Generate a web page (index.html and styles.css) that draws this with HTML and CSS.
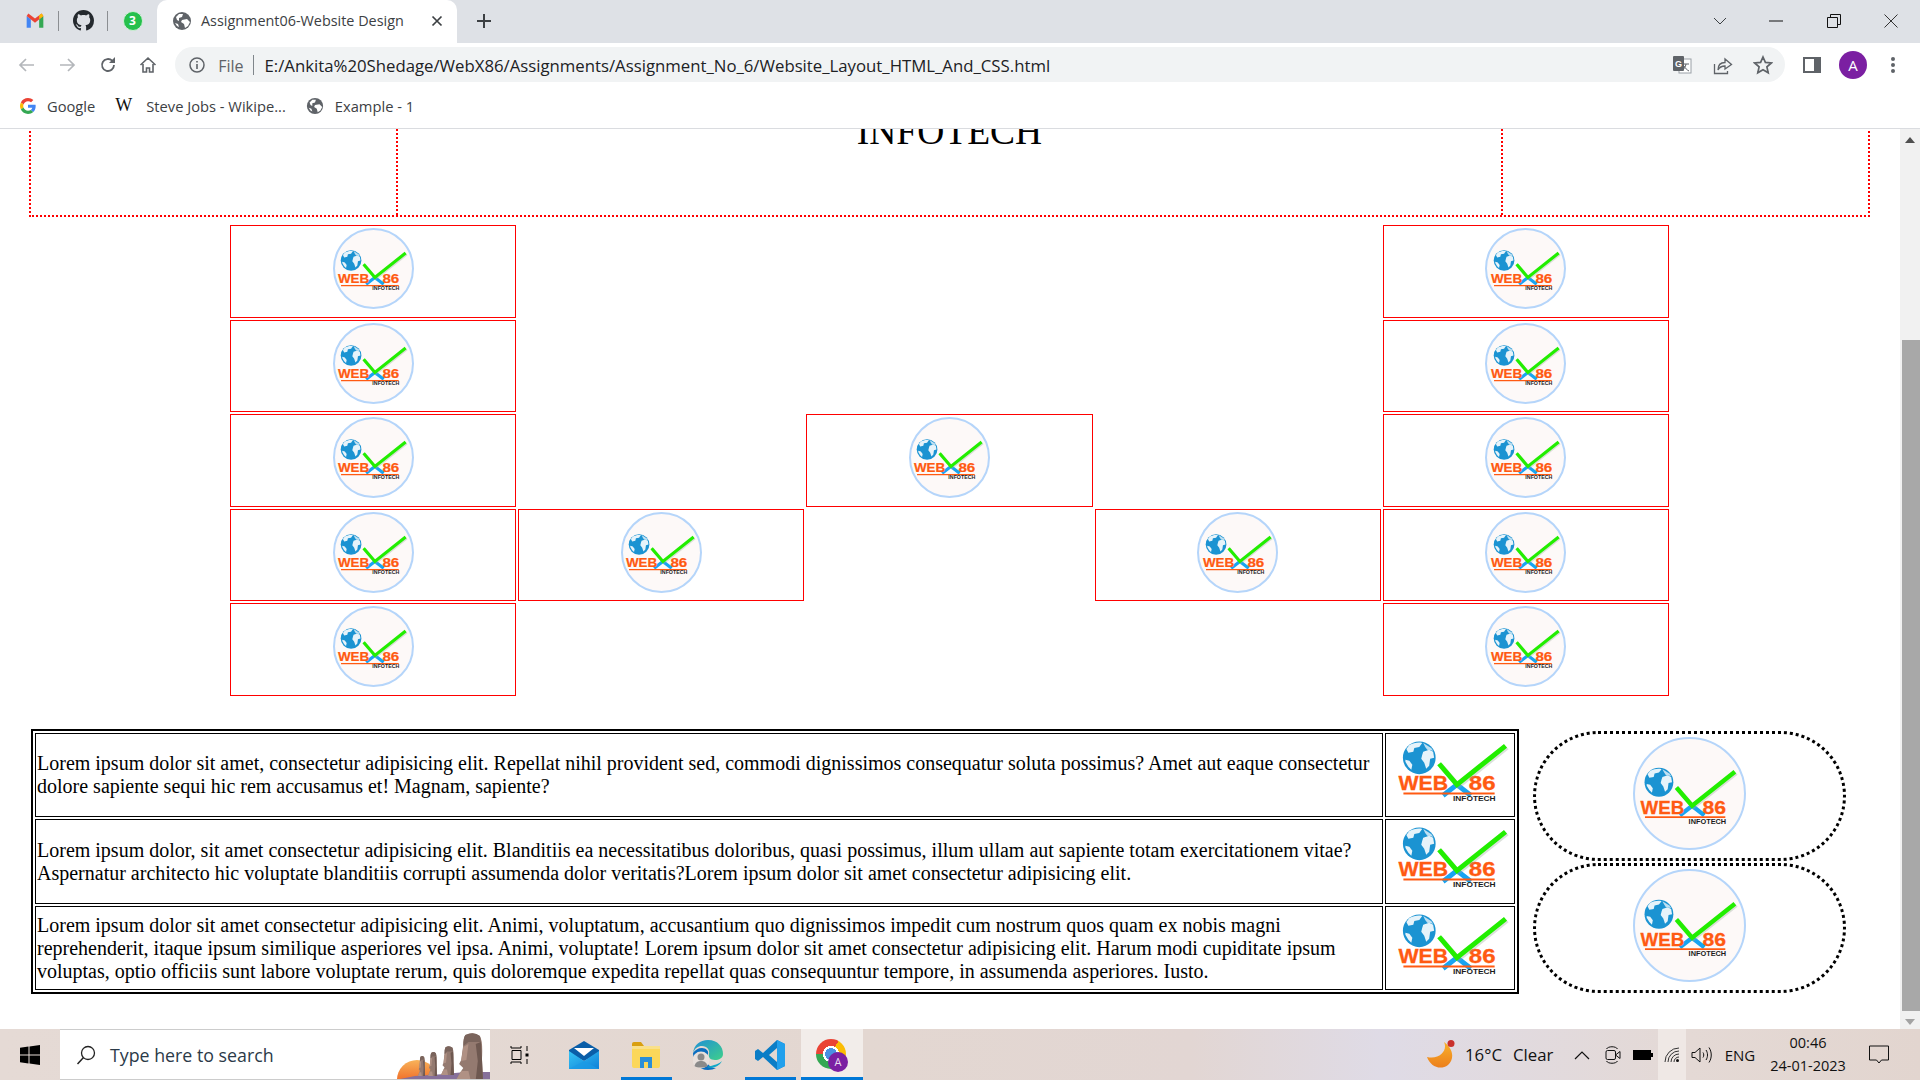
FILE: index.html
```html
<!DOCTYPE html>
<html>
  <head>
    <meta charset="utf-8" />
    <meta name="viewport" content="width=device-width, initial-scale=1" />
    <title>Assignment06-Website Design</title>
    <link rel="stylesheet" href="styles.css">
  </head>
  <body>
    <svg class="icon-defs" width="0" height="0">
      <defs>
        <linearGradient id="mail-body" x1="0" y1="0" x2="1" y2="1">
          <stop offset="0" stop-color="#35c4f5" />
          <stop offset="1" stop-color="#0f80d8" />
        </linearGradient>
        <linearGradient id="edge-top" x1="0" y1="0" x2="1" y2="1">
          <stop offset="0" stop-color="#1f8fd6" />
          <stop offset="1" stop-color="#3fd08a" />
        </linearGradient>
        <linearGradient id="sun" x1="0" y1="0" x2="0" y2="1">
          <stop offset="0" stop-color="#f8b35a" />
          <stop offset="1" stop-color="#f0702a" />
        </linearGradient>
        <linearGradient id="moon" x1="0" y1="0" x2="0" y2="1">
          <stop offset="0" stop-color="#f9b12a" />
          <stop offset="1" stop-color="#ec7f1c" />
        </linearGradient>
        <g id="logo-mark">
          <circle cx="34" cy="25" r="16.500" fill="#1b93d2" />
          <path d="M24 12c4-2 9-3 13-2l-3 4-5 1-1 4-5 1-2-4zM38 19l6-2 4 2 1 6-4 1-1 7-3 3-2-6-3-4 1-4zM20 27l4 1 3 4-1 5-3-3-3-5z" fill="#e6f3fa" />
          <path d="M38 10l8 5 2 3-6-1-2-3z" fill="#bfe0f2" />
          <path d="M58 63l14-11 14 11" fill="none" stroke="#18a4f2" stroke-width="5" />
        </g>
        <g id="logo-tick">
          <path d="M54 31l18 21 49-39" fill="none" stroke="#9aa89a" stroke-width="5" transform="translate(1.500 1.500)" opacity=".35" />
          <path d="M54 31l18 21 49-39" fill="none" stroke="#22ee00" stroke-width="5" />
        </g>
        <g id="logo-text">
          <text x="13" y="57" class="logo-web" textLength="50" lengthAdjust="spacingAndGlyphs">WEB</text>
          <text x="84" y="57" class="logo-web" textLength="27" lengthAdjust="spacingAndGlyphs">86</text>
          <rect x="18" y="60" width="92" height="2" fill="#ff5a12" />
          <text x="68" y="68.500" class="logo-info" textLength="43" lengthAdjust="spacingAndGlyphs">INFOTECH</text>
        </g>
        <symbol id="logo" viewBox="2 2 126 81">
          <use href="#logo-mark" />
          <use href="#logo-text" />
          <use href="#logo-tick" />
        </symbol>
        <symbol id="logo-round" viewBox="2 2 126 81">
          <use href="#logo-mark" />
          <use href="#logo-text" y="4" />
          <use href="#logo-tick" />
        </symbol>
        <symbol id="globe-grey" viewBox="0 0 20 20">
          <circle cx="10" cy="10" r="9" fill="#5f6368" />
          <path d="M4 6l3-3 4 0-1 3-3 1 0 3-2-1zM10 9l5-1 3 3-2 4-3 2-1-4-3-2zM3 12l3 1 1 3-2-1z" fill="#fff" />
        </symbol>
        <symbol id="moai" viewBox="0 0 26 47" preserveAspectRatio="none">
          <path d="M9 2Q17-2 23 3 26 8 25 26L26 47H0L5 38 7 35 5 33 3 31 5 27 7 12Q7 5 9 2Z" fill="#947a70" />
          <path d="M9 2Q17-2 23 3L24 9 12 9 7 13Q7 5 9 2Z" fill="#7a645c" />
          <path d="M7 14L12 11 10 27 5 28ZM5 38H12L14 47H0Z" fill="#b09184" />
          <path d="M19 11L24 9 25 26 26 47H19L21 28Z" fill="#6e5850" />
        </symbol>
      </defs>
    </svg>

    <div class="tab-strip">
      <div class="pinned-tab">
        <svg viewBox="0 0 24 24" width="20" height="20">
          <path d="M2 6v14h5V10z" fill="#4285f4" />
          <path d="M17 10v10h5V6z" fill="#34a853" />
          <path d="M2 6l10 8 10-8-2-3-8 6-8-6z" fill="#ea4335" />
          <path d="M17 10l5-4-2-3-3 2z" fill="#fbbc04" />
        </svg>
      </div>
      <div class="pinned-tab pinned-sep">
        <svg viewBox="0 0 16 16" width="21" height="21">
          <path fill="#24292e" d="M8 0C3.58 0 0 3.58 0 8c0 3.54 2.29 6.53 5.47 7.59.4.07.55-.17.55-.38 0-.19-.01-.82-.01-1.49-2.01.37-2.53-.49-2.69-.94-.09-.23-.48-.94-.82-1.13-.28-.15-.68-.52-.01-.53.63-.01 1.08.58 1.23.82.72 1.21 1.87.87 2.33.66.07-.52.28-.87.51-1.07-1.78-.2-3.64-.89-3.64-3.95 0-.87.31-1.59.82-2.15-.08-.2-.36-1.02.08-2.12 0 0 .67-.21 2.2.82.64-.18 1.32-.27 2-.27.68 0 1.36.09 2 .27 1.53-1.04 2.2-.82 2.2-.82.44 1.1.16 1.92.08 2.12.51.56.82 1.27.82 2.15 0 3.07-1.87 3.75-3.65 3.95.29.25.54.73.54 1.48 0 1.07-.01 1.93-.01 2.2 0 .21.15.46.55.38A8.013 8.013 0 0016 8c0-4.42-3.58-8-8-8z" />
        </svg>
      </div>
      <div class="pinned-tab pinned-sep">
        <div class="whatsapp">3</div>
      </div>
      <div class="tab">
        <svg class="tab-globe" width="20" height="20"><use href="#globe-grey" /></svg>
        <span class="tab-title">Assignment06-Website Design</span>
        <svg class="tab-close" viewBox="0 0 12 12" width="12" height="12">
          <path d="M1.500 1.500l9 9m0-9l-9 9" stroke="#3c4043" stroke-width="1.700" fill="none" />
        </svg>
      </div>
      <svg class="new-tab" viewBox="0 0 16 16" width="16" height="16">
        <path d="M8 1v14M1 8h14" stroke="#3c4043" stroke-width="2" fill="none" />
      </svg>
      <div class="window-controls">
        <div class="win-btn win-caret">
          <svg viewBox="0 0 14 8" width="14" height="8"><path d="M1 1l6 6 6-6" stroke="#3c4043" fill="none" /></svg>
        </div>
        <div class="win-btn">
          <svg viewBox="0 0 14 2" width="14" height="2"><path d="M0 1h14" stroke="#111" fill="none" /></svg>
        </div>
        <div class="win-btn">
          <svg viewBox="0 0 14 14" width="14" height="14"><path d="M.5 3.500h10v10H.5zM3.500 3V.5h10v10H11" stroke="#111" fill="none" /></svg>
        </div>
        <div class="win-btn">
          <svg viewBox="0 0 14 14" width="14" height="14"><path d="M.5.5l13 13m0-13l-13 13" stroke="#333" fill="none" /></svg>
        </div>
      </div>
    </div>

    <div class="toolbar">
      <div class="nav-btn">
        <svg viewBox="0 0 18 18" width="18" height="18"><path d="M16 9H2m6-6L2 9l6 6" stroke="#b4b7bb" stroke-width="1.700" fill="none" /></svg>
      </div>
      <div class="nav-btn">
        <svg viewBox="0 0 18 18" width="18" height="18"><path d="M2 9h14m-6-6l6 6-6 6" stroke="#b4b7bb" stroke-width="1.700" fill="none" /></svg>
      </div>
      <div class="nav-btn">
        <svg viewBox="0 0 18 18" width="18" height="18"><path d="M15 9a6 6 0 1 1-1.800-4.300" stroke="#5f6368" stroke-width="1.800" fill="none" /><path d="M16 1v6h-6z" fill="#5f6368" /></svg>
      </div>
      <div class="nav-btn">
        <svg viewBox="0 0 18 18" width="18" height="18"><path d="M1.500 9L9 2l7.500 7M4 8v8h3.500v-4h3v4H14V8" stroke="#5f6368" stroke-width="1.600" fill="none" /></svg>
      </div>
      <div class="omnibox">
        <svg class="info-icon" viewBox="0 0 16 16" width="16" height="16">
          <circle cx="8" cy="8" r="7" stroke="#5f6368" stroke-width="1.500" fill="none" />
          <path d="M8 7v5M8 4v1.600" stroke="#5f6368" stroke-width="1.600" fill="none" />
        </svg>
        <span class="url-scheme">File</span>
        <span class="url-sep"></span>
        <span class="url-text">E:/Ankita%20Shedage/WebX86/Assignments/Assignment_No_6/Website_Layout_HTML_And_CSS.html</span>
        <div class="omni-actions">
          <div class="omni-btn">
            <svg viewBox="0 0 20 20" width="20" height="20">
              <rect x="7" y="4" width="12" height="14" fill="#fff" stroke="#9aa0a6" />
              <rect x="1" y="1" width="11" height="15" rx="1" fill="#5f6368" />
              <text x="3" y="12" class="translate-g">G</text>
              <path d="M11 9h6M14 9c-.5 3-2 5-3.500 6M12 11c1 2 3 4 5 5" stroke="#5f6368" fill="none" />
            </svg>
          </div>
          <div class="omni-btn omni-share">
            <svg viewBox="0 0 20 20" width="20" height="20">
              <path d="M1.500 9v9.500h13V16M5 15c0-5 3-7.500 7-7.500V4l6.500 5.500L12 14v-3c-3 0-5.500 1-7 4z" stroke="#5f6368" stroke-width="1.300" fill="none" />
            </svg>
          </div>
          <div class="omni-btn">
            <svg viewBox="0 0 20 20" width="20" height="20">
              <path d="M10 2l2.400 5.400 5.900.6-4.400 3.900 1.300 5.800L10 14.700l-5.200 3 1.300-5.800L1.700 8l5.900-.6z" stroke="#5f6368" stroke-width="1.700" fill="none" />
            </svg>
          </div>
        </div>
      </div>
      <div class="tool-btn">
        <svg viewBox="0 0 18 18" width="18" height="18">
          <rect x="0" y="1" width="18" height="16" fill="#5f6368" />
          <rect x="2" y="3" width="9" height="12" fill="#fff" />
        </svg>
      </div>
      <div class="tool-btn"><div class="avatar">A</div></div>
      <div class="tool-btn">
        <svg viewBox="0 0 4 18" width="4" height="18"><circle cx="2" cy="3" r="2" fill="#5f6368" /><circle cx="2" cy="9" r="2" fill="#5f6368" /><circle cx="2" cy="15" r="2" fill="#5f6368" /></svg>
      </div>
    </div>

    <div class="bookmarks">
      <div class="bookmark bm-google">
        <svg viewBox="0 0 48 48" width="16" height="16">
          <path fill="#ea4335" d="M24 9.500c3.500 0 6.700 1.200 9.200 3.600l6.900-6.900C35.900 2.400 30.500 0 24 0 14.600 0 6.500 5.400 2.600 13.200l8 6.200C12.400 13.700 17.700 9.500 24 9.500z" />
          <path fill="#4285f4" d="M47 24.500c0-1.600-.1-3.100-.4-4.500H24v9h12.900c-.6 3-2.200 5.500-4.800 7.200l7.700 6C44.300 38 47 31.800 47 24.500z" />
          <path fill="#fbbc05" d="M10.500 28.600c-.5-1.400-.8-3-.8-4.600s.3-3.200.8-4.600l-8-6.200C.9 16.500 0 20.100 0 24s.9 7.500 2.600 10.800z" />
          <path fill="#34a853" d="M24 48c6.500 0 11.900-2.100 15.900-5.800l-7.700-6c-2.200 1.400-4.900 2.300-8.200 2.300-6.300 0-11.600-4.200-13.500-9.900l-8 6.200C6.500 42.600 14.600 48 24 48z" />
        </svg>
        <span>Google</span>
      </div>
      <div class="bookmark bm-wiki">
        <span class="wiki-w">W</span>
        <span>Steve Jobs - Wikipe...</span>
      </div>
      <div class="bookmark bm-example">
        <svg width="18" height="18"><use href="#globe-grey" /></svg>
        <span>Example - 1</span>
      </div>
    </div>

    <div class="viewport">
      <div class="page">
        <div class="site-header">
          <div class="header-side"></div>
          <div class="header-title">INFOTECH</div>
          <div class="header-side"></div>
        </div>

        <div class="logo-grid">
          <div class="box col-1 row-1"><div class="logo-circle"><svg><use href="#logo-round" /></svg></div></div>
          <div class="box col-1 row-2"><div class="logo-circle"><svg><use href="#logo-round" /></svg></div></div>
          <div class="box col-1 row-3"><div class="logo-circle"><svg><use href="#logo-round" /></svg></div></div>
          <div class="box col-1 row-4"><div class="logo-circle"><svg><use href="#logo-round" /></svg></div></div>
          <div class="box col-1 row-5"><div class="logo-circle"><svg><use href="#logo-round" /></svg></div></div>
          <div class="box col-2 row-4"><div class="logo-circle"><svg><use href="#logo-round" /></svg></div></div>
          <div class="box col-3 row-3"><div class="logo-circle"><svg><use href="#logo-round" /></svg></div></div>
          <div class="box col-4 row-4"><div class="logo-circle"><svg><use href="#logo-round" /></svg></div></div>
          <div class="box col-5 row-1"><div class="logo-circle"><svg><use href="#logo-round" /></svg></div></div>
          <div class="box col-5 row-2"><div class="logo-circle"><svg><use href="#logo-round" /></svg></div></div>
          <div class="box col-5 row-3"><div class="logo-circle"><svg><use href="#logo-round" /></svg></div></div>
          <div class="box col-5 row-4"><div class="logo-circle"><svg><use href="#logo-round" /></svg></div></div>
          <div class="box col-5 row-5"><div class="logo-circle"><svg><use href="#logo-round" /></svg></div></div>
        </div>

        <div class="lower">
          <table class="info-table">
            <tr>
              <td>Lorem ipsum dolor sit amet, consectetur adipisicing elit. Repellat nihil provident sed, commodi dignissimos consequatur soluta possimus? Amet aut eaque consectetur dolore sapiente sequi hic rem accusamus et! Magnam, sapiente?</td>
              <td class="logo-cell"><svg><use href="#logo" /></svg></td>
            </tr>
            <tr>
              <td>Lorem ipsum dolor, sit amet consectetur adipisicing elit. Blanditiis ea necessitatibus doloribus, quasi possimus, illum ullam aut sapiente totam exercitationem vitae? Aspernatur architecto hic voluptate blanditiis corrupti assumenda dolor veritatis?Lorem ipsum dolor sit amet consectetur adipisicing elit.</td>
              <td class="logo-cell"><svg><use href="#logo" /></svg></td>
            </tr>
            <tr>
              <td>Lorem ipsum dolor sit amet consectetur adipisicing elit. Animi, voluptatum, accusantium quo dignissimos impedit cum nostrum quos quam ex nobis magni reprehenderit, itaque ipsum similique asperiores vel ipsa. Animi, voluptate! Lorem ipsum dolor sit amet consectetur adipisicing elit. Harum modi cupiditate ipsum voluptas, optio officiis sunt labore voluptate rerum, quis doloremque expedita repellat quas consequuntur tempore, in assumenda asperiores. Iusto.</td>
              <td class="logo-cell"><svg><use href="#logo" /></svg></td>
            </tr>
          </table>
          <div class="pills">
            <div class="pill"><div class="logo-circle logo-circle-big"><svg><use href="#logo-round" /></svg></div></div>
            <div class="pill"><div class="logo-circle logo-circle-big"><svg><use href="#logo-round" /></svg></div></div>
          </div>
        </div>
      </div>
      <div class="scrollbar">
        <svg class="scroll-arrow" viewBox="0 0 10 6" width="10" height="6"><path d="M5 0l5 6H0z" fill="#505050" /></svg>
        <div class="scroll-track"><div class="scroll-thumb"></div></div>
        <svg class="scroll-arrow" viewBox="0 0 10 6" width="10" height="6"><path d="M0 0h10L5 6z" fill="#a3a3a3" /></svg>
      </div>
    </div>

    <div class="taskbar">
      <div class="start-btn">
        <svg viewBox="0 0 20 20" width="20" height="20">
          <path d="M0 2.800l8.500-1.200v7.900H0zM9.500 1.400L20 0v9.500H9.500zM0 10.500h8.500v7.900L0 17.200zM9.500 10.500H20V20L9.500 18.600z" fill="#000" />
        </svg>
      </div>
      <div class="search-box">
        <svg class="search-icon" viewBox="0 0 20 20" width="20" height="20">
          <circle cx="12" cy="8" r="6.500" stroke="#222" stroke-width="1.300" fill="none" />
          <path d="M7.500 12.500L1.500 19" stroke="#222" stroke-width="1.500" />
        </svg>
        <span class="search-text">Type here to search</span>
        <svg class="search-art" viewBox="0 0 95 50" width="95" height="50">
          <path d="M2 50A20 20 0 0 1 42 50z" fill="url(#sun)" />
          <path d="M0 50L20 46 50 44 70 42H95V50z" fill="#86709a" />
          <use href="#moai" x="23" y="26" width="7" height="20" />
          <use href="#moai" x="33" y="22" width="9" height="24" />
          <use href="#moai" x="46" y="16" width="13" height="29" />
          <use href="#moai" x="61" y="3" width="27" height="47" />
        </svg>
      </div>
      <div class="task-cell task-view">
        <svg viewBox="0 0 20 20" width="20" height="20">
          <path d="M1 1v2h10V1M2 5.500h9v9H2zM1 19v-2h10v2M17 1v5M17 14v5" stroke="#000" fill="none" />
          <rect x="15.500" y="8.500" width="3" height="3" fill="#000" />
        </svg>
      </div>
      <div class="task-cell task-mail">
        <svg viewBox="0 0 30 28" width="30" height="28">
          <path d="M0 9L15 0l15 9v3L15 20 0 12z" fill="#0a5ea8" />
          <path d="M5 7h20l-10 8z" fill="#fff" />
          <path d="M0 10l15 10 15-10v18H0z" fill="url(#mail-body)" />
          <path d="M0 28l15-8 15 8z" fill="#1a9ae6" opacity=".7" />
        </svg>
      </div>
      <div class="task-cell task-open">
        <svg viewBox="0 0 28 26" width="28" height="26">
          <path d="M0 2a2 2 0 0 1 2-2h7l3 4H0z" fill="#d99f10" />
          <path d="M0 4h28v20a2 2 0 0 1-2 2H2a2 2 0 0 1-2-2z" fill="#fbd75a" />
          <path d="M0 4h28v3H0z" fill="#f9e08a" />
          <path d="M8 26V15h12v11h-4v-6h-4v6z" fill="#2a8ed8" />
        </svg>
      </div>
      <div class="task-cell">
        <svg viewBox="0 0 30 30" width="30" height="30">
          <path d="M15 0C25 0 30 7 30 14c0 4-4 6-8 6-5 0-7-3-6-6 1-4-2-8-7-8C5 6 2 8 0 13 1 5 7 0 15 0z" fill="url(#edge-top)" />
          <path d="M0 13c2-3 5-5 9-5 4 0 7 3 6 6-2 3-3 6-1 9 2 3 5 5 9 5-2 1-5 2-8 2C6 30 0 23 0 13z" fill="#0c6ec0" />
          <path d="M14 27c5 2 12 0 15-6-3 3-8 4-15 6z" fill="#11a8c8" />
          <circle cx="8" cy="20" r="8.500" fill="#e8e0dc" />
          <circle cx="8" cy="17" r="3.500" fill="#8a8a8a" />
          <path d="M1.500 26c1-4 3.500-5 6.500-5s5.500 1 6.500 5c-2 2-11 2-13 0z" fill="#8a8a8a" />
        </svg>
      </div>
      <div class="task-cell task-open">
        <svg viewBox="0 0 30 30" width="30" height="30">
          <path d="M22 0l8 4v22l-8 4L8 17l-5 4-3-2v-8l3-2 5 4zM22 8l-8 7 8 7z" fill="#0a7dc6" />
          <path d="M22 0l8 4v22l-8 4z" fill="#21a0ec" />
        </svg>
      </div>
      <div class="task-cell task-open task-active">
        <div class="chrome-icon"><div class="chrome-ball"></div><div class="chrome-badge">A</div></div>
      </div>
      <div class="tray">
        <div class="tray-moon">
          <svg viewBox="0 0 29 30" width="29" height="30">
            <path d="M18 2C22 10 14 20 1 17 4 26 14 31 22 25 29 19 27 8 18 2Z" fill="url(#moon)" />
            <circle cx="25" cy="3.500" r="3.500" fill="#c9302c" />
          </svg>
        </div>
        <span class="tray-temp">16°C</span>
        <span class="tray-clear">Clear</span>
        <div class="tray-icon tray-chevron">
          <svg viewBox="0 0 16 10" width="16" height="10"><path d="M1 9l7-7 7 7" stroke="#111" stroke-width="1.200" fill="none" /></svg>
        </div>
        <div class="tray-icon tray-camera">
          <svg viewBox="0 0 16 20" width="16" height="20">
            <path d="M1.500 4C3 1 11 1 12.500 4M1.500 16c1.500 3 9.500 3 11 0" stroke="#111" fill="none" />
            <rect x="1" y="5.500" width="9.500" height="9" rx="1.500" stroke="#111" fill="none" />
            <path d="M10.500 10L15 6.500v7z" stroke="#111" fill="none" />
          </svg>
        </div>
        <div class="tray-icon tray-battery">
          <svg viewBox="0 0 20 10" width="20" height="10">
            <rect x=".5" y=".5" width="17" height="9" fill="#000" stroke="#000" />
            <rect x="18" y="3" width="2" height="4" fill="#000" />
          </svg>
        </div>
        <div class="tray-icon tray-wifi">
          <svg viewBox="0 0 16 16" width="16" height="16">
            <path d="M1 15A14 14 0 0 1 15 1M4 15A11 11 0 0 1 15 4M7 15A8 8 0 0 1 15 7M10 15A5 5 0 0 1 15 10" stroke="#333" fill="none" />
            <circle cx="13.500" cy="13.500" r="1.500" fill="#111" />
          </svg>
        </div>
        <div class="tray-icon tray-volume">
          <svg viewBox="0 0 22 18" width="22" height="18">
            <path d="M1 6.500h3L9 2v14l-5-4.500H1z" stroke="#111" fill="none" />
            <path d="M12 6.500c1 1.500 1 3.500 0 5M15 4c2 3 2 7 0 10M18 1.500c3 4.500 3 10.500 0 15" stroke="#111" fill="none" />
          </svg>
        </div>
        <span class="tray-lang">ENG</span>
        <div class="tray-clock">
          <span>00:46</span>
          <span>24-01-2023</span>
        </div>
        <div class="tray-icon tray-notify">
          <svg viewBox="0 0 20 20" width="20" height="20">
            <path d="M.5 1h19v14h-7l-2.500 3-2.500-3h-7z" stroke="#111" fill="none" />
          </svg>
        </div>
      </div>
    </div>
  </body>
</html>
```

FILE: styles.css
```css
html,
body {
  margin: 0;
  padding: 0;
}

body {
  width: 1920px;
  height: 1080px;
  overflow: hidden;
  display: flex;
  flex-direction: column;
  background: #fff;
  font-family: "Open Sans", "Liberation Sans", sans-serif;
}

.icon-defs {
  position: absolute;
}

.logo-web {
  font: bold 20px "Liberation Sans", sans-serif;
  fill: #ff5a12;
  stroke: #ff5a12;
  stroke-width: 0.3px;
}
.logo-info {
  font: bold 7.500px "Liberation Sans", sans-serif;
  fill: #1c1c1c;
}
.translate-g {
  font: bold 9px "Liberation Sans", sans-serif;
  fill: #fff;
}

/* tab strip */
.tab-strip {
  height: 43px;
  flex: none;
  display: flex;
  align-items: center;
  padding-left: 10px;
  background: #dee1e6;
}
.pinned-tab {
  width: 49px;
  height: 20px;
  margin-bottom: 2px;
  display: flex;
  align-items: center;
  justify-content: center;
}
.pinned-sep {
  border-left: 1px solid #8b8e92;
  margin-left: -1px;
}
.whatsapp {
  width: 18px;
  height: 18px;
  border-radius: 50%;
  background: #25c04c;
  border: 1px solid #cfeed6;
  color: #fff;
  font-size: 12px;
  font-weight: 700;
  line-height: 18px;
  text-align: center;
}
.tab {
  width: 300px;
  height: 43px;
  box-sizing: border-box;
  padding-bottom: 2px;
  display: flex;
  align-items: center;
  background: #fff;
  border-radius: 10px 10px 0 0;
  color: #3c4043;
}
.tab-globe {
  margin-left: 15px;
  flex: none;
}
.tab-title {
  margin-left: 9px;
  font-size: 14.400px;
  white-space: nowrap;
}
.tab-close {
  margin-left: auto;
  margin-right: 14px;
}
.new-tab {
  margin: 0 0 2px 19px;
}
.window-controls {
  margin: 0 0 2px auto;
  display: flex;
  align-items: center;
  height: 36px;
}
.win-btn {
  width: 57.500px;
  display: flex;
  justify-content: center;
}
.win-caret {
  width: 40px;
  margin-right: 8px;
}

/* address bar */
.toolbar {
  height: 43px;
  flex: none;
  display: flex;
  align-items: center;
  padding-left: 7px;
  background: #fff;
}
.nav-btn {
  width: 40.300px;
  display: flex;
  justify-content: center;
}
.omnibox {
  width: 1610px;
  height: 35px;
  margin-left: 7px;
  display: flex;
  align-items: center;
  border-radius: 18px;
  background: #f1f3f4;
}
.info-icon {
  margin-left: 14px;
}
.url-scheme {
  margin: 2px 0 0 13px;
  color: #5f6368;
  font-size: 16px;
}
.url-sep {
  width: 1px;
  height: 20px;
  margin-left: 9px;
  background: #80868b;
}
.url-text {
  margin: 2px 0 0 11px;
  color: #202124;
  font-size: 16.750px;
  white-space: nowrap;
}
.omni-actions {
  margin-left: auto;
  padding-right: 2px;
  display: flex;
}
.omni-btn {
  width: 40px;
  display: flex;
  justify-content: center;
}
.omni-share {
  padding-left: 1px;
}
.tool-btn {
  width: 40.500px;
  display: flex;
  justify-content: center;
  align-items: center;
}
.omnibox + .tool-btn {
  margin-left: 7px;
}
.avatar {
  width: 28px;
  height: 28px;
  border-radius: 50%;
  background: #7b1fa2;
  color: #fff;
  font-size: 15px;
  line-height: 28px;
  text-align: center;
}

/* bookmarks */
.bookmarks {
  height: 42px;
  flex: none;
  display: flex;
  align-items: center;
  background: #fff;
  border-bottom: 1px solid #dadce0;
  color: #3c4043;
  font-size: 14.700px;
}
.bookmark {
  display: flex;
  align-items: center;
  gap: 11px;
  white-space: nowrap;
  margin-bottom: 3px;
}
.bm-google {
  margin-left: 20px;
}
.bm-wiki {
  margin-left: 20px;
}
.wiki-w {
  width: 20px;
  font: 18px "Liberation Serif", serif;
  color: #111;
}
.bm-example {
  margin-left: 20px;
}

/* scrolled page */
.viewport {
  height: 900px;
  flex: none;
  display: flex;
  overflow: hidden;
}
.page {
  width: 1900px;
  flex: none;
  padding-left: 29px;
  box-sizing: border-box;
  font-family: "Liberation Serif", "Times New Roman", serif;
  color: #000;
}
.site-header {
  width: 1841px;
  height: 183px;
  margin-top: -95px;
  box-sizing: border-box;
  display: grid;
  grid-template-columns: 365px 1fr 365px;
  border: 2px dotted #f00;
}
.header-side + .header-title {
  border-left: 2px dotted #f00;
  border-right: 2px dotted #f00;
}
.header-title {
  padding-top: 74px;
  font-size: 37.500px;
  line-height: 43px;
  text-align: center;
}

.logo-grid {
  display: grid;
  grid-template-columns: repeat(5, 286.200px);
  grid-template-rows: repeat(5, 92.600px);
  gap: 2px;
  margin: 8px 0 0 201px;
}
.box {
  box-sizing: border-box;
  border: 1px solid #f00;
  padding-top: 2px;
  display: flex;
  justify-content: center;
}
.col-1 { grid-column: 1; }
.col-2 { grid-column: 2; }
.col-3 { grid-column: 3; }
.col-4 { grid-column: 4; }
.col-5 { grid-column: 5; }
.row-1 { grid-row: 1; }
.row-2 { grid-row: 2; }
.row-3 { grid-row: 3; }
.row-4 { grid-row: 4; }
.row-5 { grid-row: 5; }

.logo-circle {
  width: 81px;
  height: 81px;
  box-sizing: border-box;
  padding: 6px 5px 0 0;
  display: flex;
  align-items: center;
  justify-content: center;
  border-radius: 50%;
  background: #fdf9f8;
  border: 2px solid #b5d5fa;
}
.logo-circle svg {
  width: 79px;
  height: 51px;
  flex: none;
  overflow: visible;
}
.logo-circle-big {
  width: 113px;
  height: 113px;
  padding: 8px 7px 0 0;
}
.logo-circle-big svg {
  width: 110px;
  height: 71px;
}

.lower {
  display: flex;
  margin: 33px 0 0 2px;
}
.info-table {
  width: 1488px;
  height: 265px;
  flex: none;
  border: 2px solid #000;
  border-spacing: 2px;
  box-sizing: border-box;
  font-size: 20px;
  line-height: 23px;
}
.info-table td {
  border: 1px solid #000;
  padding: 1px;
}
.info-table tr + tr td {
  padding: 2px 1px 0;
}
.info-table .logo-cell,
.info-table tr + tr .logo-cell {
  width: 126px;
  padding: 1px;
}
.logo-cell svg {
  width: 126px;
  height: 80.300px;
  display: block;
}

.pills {
  margin-left: 14px;
  padding-top: 2px;
  display: flex;
  flex-direction: column;
  gap: 2px;
}
.pill {
  width: 313px;
  height: 130px;
  box-sizing: border-box;
  padding-top: 3px;
  display: flex;
  justify-content: center;
  border: 3px dotted #000;
  border-radius: 65px;
}

/* fake scrollbar */
.scrollbar {
  width: 20px;
  flex: none;
  display: flex;
  flex-direction: column;
  align-items: center;
  background: #f1f1f1;
}
.scroll-arrow {
  flex: none;
  margin: 8px 0 6px;
}
.scroll-track {
  flex: 1;
  width: 100%;
}
.scroll-thumb {
  height: 671px;
  margin: 191px 0 0 2px;
  background: #a8a8a8;
}

/* windows taskbar */
.taskbar {
  height: 51px;
  flex: none;
  display: flex;
  background: linear-gradient(90deg, #e5dad5 0%, #e3d7d1 45%, #e2d6d3 62%, #dfdbe6 72%, #e4d9d5 88%, #e2d5cf 100%);
}
.start-btn {
  width: 60px;
  display: flex;
  align-items: center;
  justify-content: center;
}
.search-box {
  width: 430px;
  box-sizing: border-box;
  display: flex;
  align-items: center;
  background: #fff;
  border-top: 1px solid #ccc;
  border-bottom: 1px solid #ccc;
  overflow: hidden;
  color: #2b3a48;
}
.search-icon {
  margin-left: 16px;
}
.search-text {
  margin-left: 14px;
  font-size: 17.800px;
  white-space: nowrap;
}
.search-art {
  margin-left: auto;
  flex: none;
}
.task-cell {
  width: 62px;
  display: flex;
  align-items: center;
  justify-content: center;
  position: relative;
}
.task-view {
  width: 60px;
}
.task-mail {
  margin-left: 3px;
}
.task-open::after {
  content: "";
  position: absolute;
  left: 6px;
  right: 5px;
  bottom: 0;
  height: 3px;
  background: #0078d7;
}
.task-active {
  background: #f2edea;
}
.task-active::after {
  left: 0;
  right: 0;
}
.chrome-icon {
  width: 32px;
  height: 32px;
  position: relative;
}
.chrome-ball {
  width: 30px;
  height: 30px;
  box-sizing: border-box;
  border-radius: 50%;
  background:
    radial-gradient(circle, #4a90e2 0 6px, #fff 6px 8px, transparent 8px),
    conic-gradient(#ea4335 0 30deg, #fbbc04 30deg 150deg, #34a853 150deg 270deg, #ea4335 270deg 360deg);
}
.chrome-badge {
  position: absolute;
  right: 0;
  bottom: -1px;
  width: 20px;
  height: 20px;
  border-radius: 50%;
  background: #7b1fa2;
  color: #e8dcef;
  font-size: 11px;
  line-height: 20px;
  text-align: center;
}
.tray {
  margin-left: auto;
  width: 500px;
  padding-right: 11px;
  box-sizing: border-box;
  flex: none;
  display: flex;
  align-items: center;
  color: #111;
  font-size: 16.800px;
  white-space: nowrap;
}
.tray-moon {
  width: 40px;
  display: flex;
  justify-content: center;
  flex: none;
}
.tray-temp {
  width: 36px;
  margin-left: 5px;
  flex: none;
}
.tray-clear {
  width: 39px;
  margin-left: 12px;
  flex: none;
}
.tray-icon {
  display: flex;
  justify-content: center;
  align-items: center;
  flex: none;
  width: 30px;
  height: 100%;
}
.tray-chevron {
  width: 32px;
  margin-left: 14px;
}
.tray-wifi {
  width: 28px;
  background: #efe8e5;
}
.tray-volume {
  width: 32px;
}
.tray-lang {
  width: 44px;
  flex: none;
  text-align: center;
  font-size: 15px;
}
.tray-clock {
  width: 80px;
  margin: 0 0 0 6px;
  flex: none;
  display: flex;
  flex-direction: column;
  align-items: center;
  gap: 5px;
  font-size: 14.500px;
  line-height: 18px;
}
.tray-notify {
  width: 60px;
  margin-left: 1px;
}
```
